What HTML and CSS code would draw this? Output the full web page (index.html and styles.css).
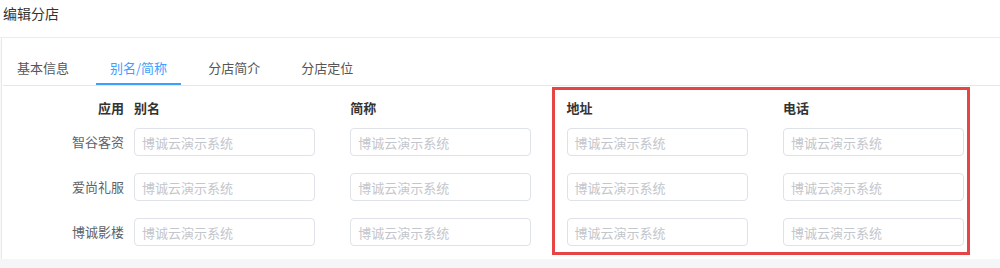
FILE: index.html
```html
<!DOCTYPE html>
<html lang="zh-CN">
<head>
    <meta charset="UTF-8">
    <meta name="viewport" content="width=device-width, initial-scale=1.0">
    <title>编辑分店</title>
    <link rel="stylesheet" href="styles.css">
</head>
<body>
    <div id="page-title">编辑分店</div>
    <div id="edit-card">
        <div class="tabs">
            <div class="tab">基本信息</div>
            <div class="tab active">别名/简称</div>
            <div class="tab">分店简介</div>
            <div class="tab">分店定位</div>
        </div>
        <div class="alias-form">
            <div class="form-head">
                <div class="row-label">应用</div>
                <div>别名</div>
                <div>简称</div>
                <div>地址</div>
                <div>电话</div>
            </div>
            <div class="form-row">
                <div class="row-label">智谷客资</div>
                <div class="cell"><input type="text" placeholder="博诚云演示系统"></div>
                <div class="cell"><input type="text" placeholder="博诚云演示系统"></div>
                <div class="cell"><input type="text" placeholder="博诚云演示系统"></div>
                <div class="cell"><input type="text" placeholder="博诚云演示系统"></div>
            </div>
            <div class="form-row">
                <div class="row-label">爱尚礼服</div>
                <div class="cell"><input type="text" placeholder="博诚云演示系统"></div>
                <div class="cell"><input type="text" placeholder="博诚云演示系统"></div>
                <div class="cell"><input type="text" placeholder="博诚云演示系统"></div>
                <div class="cell"><input type="text" placeholder="博诚云演示系统"></div>
            </div>
            <div class="form-row">
                <div class="row-label">博诚影楼</div>
                <div class="cell"><input type="text" placeholder="博诚云演示系统"></div>
                <div class="cell"><input type="text" placeholder="博诚云演示系统"></div>
                <div class="cell"><input type="text" placeholder="博诚云演示系统"></div>
                <div class="cell"><input type="text" placeholder="博诚云演示系统"></div>
            </div>
        </div>
        <!-- highlight around the new address / phone columns -->
        <div class="highlight"></div>
    </div>
</body>
</html>
```

FILE: styles.css
```css
html {
    background-color: #f4f5f7;
}
body {
    margin: 0;
    font-family: "Noto Sans CJK SC", "Noto Sans", "Liberation Sans", sans-serif;
    color: #333;
    background-color: #fff;
}
#page-title {
    box-sizing: border-box;
    height: 38px;
    padding: 3px 3px 0;
    line-height: 20px;
    font-size: 14px;
    color: #333;
    border-bottom: 1px solid #ebedf0;
}
#edit-card {
    position: relative;
    margin-left: 1px;
    border-left: 1px solid #e6e8eb;
    background-color: #fff;
    box-shadow: 0 2px 4px rgba(0,0,0,0.06);
    padding-bottom: 13px;
}
.tabs {
    display: flex;
    gap: 13px;
    margin-left: 1px;
    padding-top: 15px;
    border-bottom: 1px solid #e4e7ed;
}
.tab {
    box-sizing: border-box;
    height: 32px;
    line-height: 30px;
    padding: 0 14px;
    font-size: 13px;
    color: #555;
    border-bottom: 2px solid transparent;
}
.tab.active {
    color: #409eff;
    border-bottom-color: #409eff;
}
.alias-form {
    padding-top: 12px;
}
.form-head,
.form-row {
    display: grid;
    grid-template-columns: 132px repeat(4, 216.3px);
    font-size: 13px;
}
.form-head {
    height: 20px;
    line-height: 20px;
    margin-bottom: 10px;
    font-weight: bold;
    color: #333;
}
.form-row {
    height: 28px;
    line-height: 28px;
    margin-bottom: 17px;
    color: #606266;
}
.form-row:last-child {
    margin-bottom: 0;
}
.row-label {
    text-align: right;
    padding-right: 10px;
}
.cell input {
    box-sizing: border-box;
    display: block;
    width: 181px;
    height: 28px;
    padding: 0 7px;
    border: 1px solid #dfe2e8;
    border-radius: 4px;
    font-family: inherit;
    font-size: 13px;
    color: #333;
    outline: none;
}
.cell input::placeholder {
    color: #c3c6cc;
}
.highlight {
    position: absolute;
    left: 550px;
    top: 49px;
    width: 418px;
    height: 168px;
    box-sizing: border-box;
    border: 3px solid #e64545;
    pointer-events: none;
}
```
